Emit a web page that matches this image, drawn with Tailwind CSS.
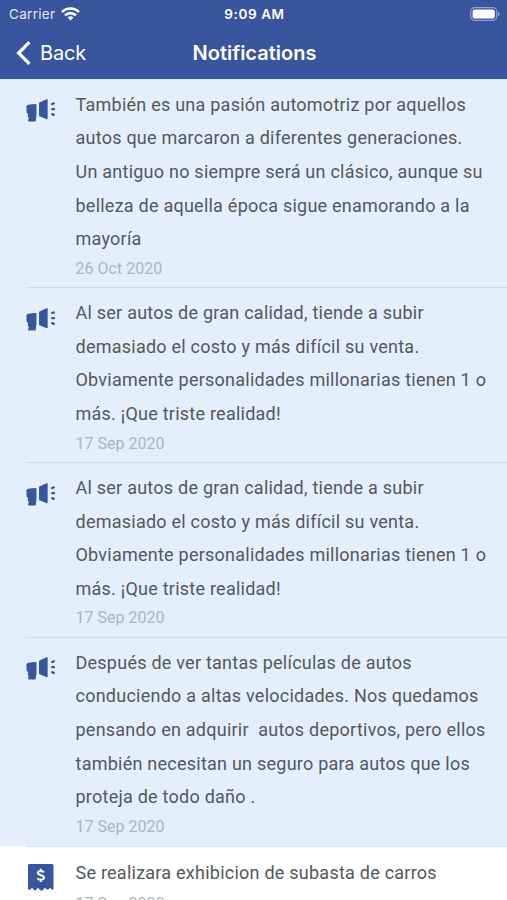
<!DOCTYPE html>
<html lang="es">
<head>
    <meta charset="UTF-8">
    <meta name="viewport" content="width=device-width, initial-scale=1.0">
    <title>Notifications</title>
    <script src="https://cdn.jsdelivr.net/npm/@tailwindcss/browser@4"></script>
</head>
<body class="bg-white h-[900px] overflow-hidden font-['Roboto',sans-serif]">
    <!-- Shared icons -->
    <svg class="hidden">
        <symbol id="megaphone" viewBox="0 0 30 24">
            <path d="M2 7.3 9.9 6.5V17.5L9 23H2.8L3.2 19.5 2.4 18.5 2.8 15.4 1.2 14.8 1 8.3z" stroke-width="1.2" stroke-linejoin="round"/>
            <path d="M13.7 5.2 21 1.8V20.6L13.7 17.6z" stroke-width="1.3" stroke-linejoin="round"/>
            <path d="M26.2 6 27.8 5.4M26.2 11.2h1.8M26.2 16.2l1.6.6" stroke-width="2.3" stroke-linecap="round"/>
        </symbol>
    </svg>

    <!-- Header -->
    <header class="h-[79px] bg-[#39559d] text-white font-['Inter',sans-serif]">
        <div class="h-7 grid grid-cols-3 items-center pl-[9px] pr-[7px]">
            <div class="flex items-center gap-[6px] text-[13.5px] text-white/85">
                <span class="tracking-[0.3px]">Carrier</span>
                <svg class="w-[19px] h-[14px]" viewBox="0 0 19 14" fill="none" stroke="#fff" stroke-width="2.6">
                    <path d="M1 5.1a12 12 0 0 1 17 0"/>
                    <path d="M4 8.4a7.8 7.8 0 0 1 11 0"/>
                    <path d="M9.5 13.6 6.5 10.6a4.3 4.3 0 0 1 6 0z" fill="#fff" stroke="none"/>
                </svg>
            </div>
            <div class="text-center text-[13.5px] font-semibold tracking-[0.6px]">9:09 AM</div>
            <svg class="w-[30px] h-[14px] justify-self-end -mt-px" viewBox="0 0 30 14">
                <rect x="0.7" y="0.7" width="26" height="12.6" rx="3.8" fill="none" stroke="#fff" stroke-opacity=".45" stroke-width="1.2"/>
                <rect x="2.6" y="2.6" width="22.2" height="8.8" rx="2" fill="#fff"/>
                <path d="M28 4.7v4.6q1.7-.8 1.7-2.3T28 4.7" fill="#fff" fill-opacity=".5"/>
            </svg>
        </div>
        <div class="h-[49px] grid grid-cols-3 items-center pl-4">
            <div class="flex items-center gap-[9px] text-[20px] tracking-[-0.2px]">
                <svg class="w-[15px] h-6" viewBox="0 0 15 24" fill="none" stroke="#fff" stroke-width="3.2">
                    <path d="M13.4 1.2 2.6 12l10.8 10.8"/>
                </svg>
                <span>Back</span>
            </div>
            <h1 class="text-center text-[20px] font-semibold -ml-[14px]">Notifications</h1>
        </div>
    </header>

    <!-- Notification list -->
    <main class="text-[18px] leading-[33.6px] text-[#54585c] tracking-[0.24px] whitespace-nowrap">
        <article class="flex bg-[#e3effb] pl-[26px]">
            <svg class="mt-[19px] w-[30px] h-6 shrink-0 fill-[#39559d] stroke-[#39559d]"><use href="#megaphone"/></svg>
            <div class="ml-[19.5px] pt-[8.8px] h-[208.4px]">
                <p>También es una pasión automotriz por aquellos<br>autos que marcaron a diferentes generaciones.<br>Un antiguo no siempre será un clásico, aunque su<br>belleza de aquella época sigue enamorando a la<br>mayoría</p>
                <time class="block text-[16px] leading-[26px] tracking-[0.02px] text-[#adb7c0]">26 Oct 2020</time>
            </div>
        </article>
        <article class="flex bg-[#e3effb] pl-[26px] relative">
            <div class="absolute top-0 left-[26px] right-0 h-px bg-[#d0dbe6]"></div>
            <svg class="mt-[20px] w-[30px] h-6 shrink-0 fill-[#39559d] stroke-[#39559d]"><use href="#megaphone"/></svg>
            <div class="ml-[19.5px] pt-[8.8px] h-[174.8px]">
                <p>Al ser autos de gran calidad, tiende a subir<br>demasiado el costo y más difícil su venta.<br>Obviamente personalidades millonarias tienen 1 o<br>más. ¡Que triste realidad!</p>
                <time class="block text-[16px] leading-[26px] tracking-[0.02px] text-[#adb7c0]">17 Sep 2020</time>
            </div>
        </article>
        <article class="flex bg-[#e3effb] pl-[26px] relative">
            <div class="absolute top-0 left-[26px] right-0 h-px bg-[#d0dbe6]"></div>
            <svg class="mt-[20px] w-[30px] h-6 shrink-0 fill-[#39559d] stroke-[#39559d]"><use href="#megaphone"/></svg>
            <div class="ml-[19.5px] pt-[8.8px] h-[174.8px]">
                <p>Al ser autos de gran calidad, tiende a subir<br>demasiado el costo y más difícil su venta.<br>Obviamente personalidades millonarias tienen 1 o<br>más. ¡Que triste realidad!</p>
                <time class="block text-[16px] leading-[26px] tracking-[0.02px] text-[#adb7c0]">17 Sep 2020</time>
            </div>
        </article>
        <article class="flex bg-[#e3effb] pl-[26px] relative">
            <div class="absolute top-0 left-[26px] right-0 h-px bg-[#d0dbe6]"></div>
            <svg class="mt-[19px] w-[30px] h-6 shrink-0 fill-[#39559d] stroke-[#39559d]"><use href="#megaphone"/></svg>
            <div class="ml-[19.5px] pt-[8.8px] h-[208.8px]">
                <p>Después de ver tantas películas de autos<br>conduciendo a altas velocidades. Nos quedamos<br>pensando en adquirir&nbsp; autos deportivos, pero ellos<br>también necesitan un seguro para autos que los<br>proteja de todo daño .</p>
                <time class="block text-[16px] leading-[26px] tracking-[0.02px] text-[#adb7c0]">17 Sep 2020</time>
            </div>
        </article>
        <article class="flex bg-white pl-[26px] relative">
            <div class="absolute top-0 left-[26px] right-0 h-px bg-[#dfe3ec]"></div>
            <svg class="mt-[18px] ml-[2px] w-[26px] h-[27px] shrink-0" viewBox="0 0 26 27">
                <path d="M0 1.5Q0 0 1.5 0H24Q25.5 0 25.5 1.5V25.5H23.5Q22 22.5 20.5 25.5H18.5Q17 22.5 15.5 25.5L14.5 26.5H12.5L11.5 25.5Q10 22.5 8.5 25.5L7.5 26.5H6.5L5.5 25.5Q4 22.5 2.5 25.5H0z" fill="#39559d"/>
                <path d="M16 8.3Q15 6.9 12.8 6.9 9.9 7 9.9 9.1C9.9 11.8 16 10.5 16 13.5Q15.9 15.7 12.8 15.7 10.4 15.7 9.4 14.2M12.8 4.8v2.2M12.8 15.7v2.3" fill="none" stroke="#fff" stroke-width="2"/>
            </svg>
            <div class="ml-[21.5px] pt-[10px]">
                <p>Se realizara exhibicion de subasta de carros</p>
                <time class="block text-[16px] leading-[26px] pt-[2px] tracking-[0.02px] text-[#b1b4b9]">17 Sep 2020</time>
            </div>
        </article>
    </main>
</body>
</html>
